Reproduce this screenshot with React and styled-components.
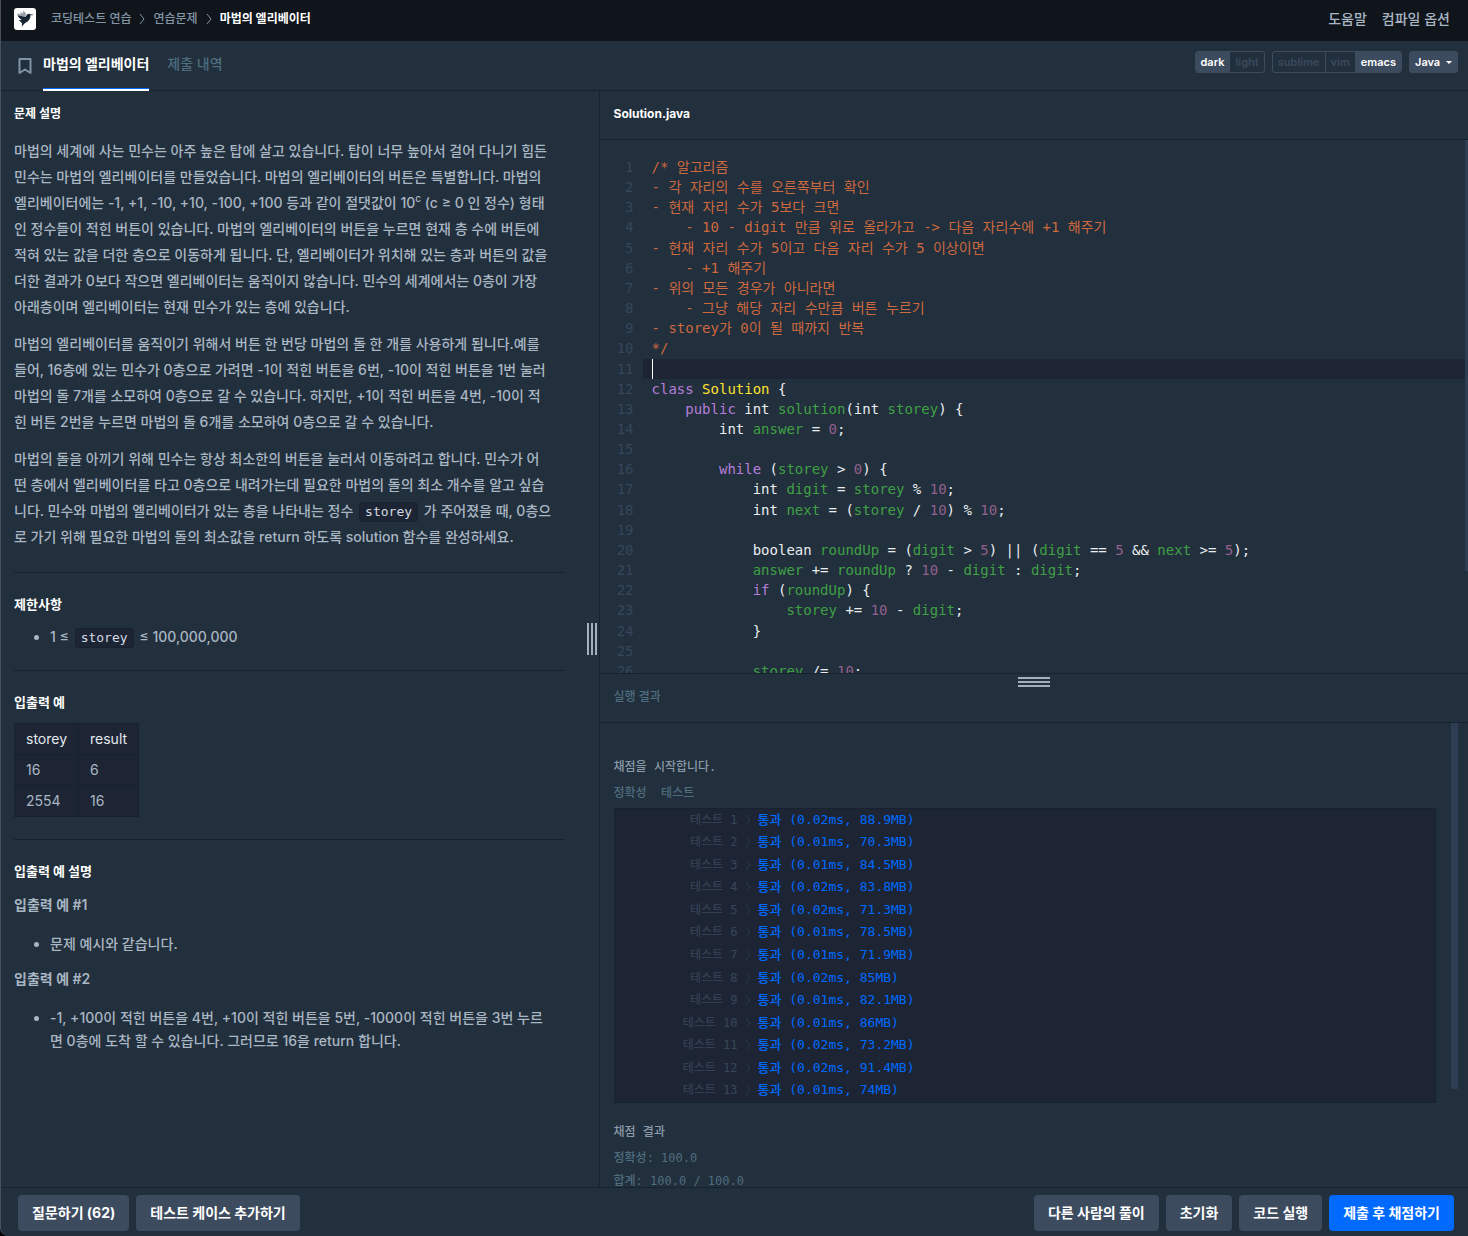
import React, { useState } from 'react'
import styled, { createGlobalStyle, css } from 'styled-components';

const sans = `Inter, "Noto Sans CJK KR", sans-serif`;
const mono = `"DejaVu Sans Mono", "Noto Sans CJK KR", monospace`;

const colors = {
    bg: '#222f3c',
    dark: '#1d2534',
    line: '#172230',
    button: '#3d4b5f',
    text: '#a9b6c3',
    muted: '#4e6d7f',
    primary: '#006aff',
}

const GlobalStyle = createGlobalStyle`
    * { box-sizing: border-box; }
    body {
        margin: 0;
        background: #000;
        color: ${colors.text};
        font-family: ${sans};
        font-size: 14px;
    }
    button, select { font-family: inherit; }
    a { color: inherit; text-decoration: none; }
`

const Page = styled.div`
    display: flex;
    flex-direction: column;
    height: 100vh;
    overflow: hidden;
    background: ${colors.bg};
    border-left: 1px solid #45525e;
    border-bottom-left-radius: 8px;
`

const Header = styled.header`
    display: flex;
    align-items: center;
    justify-content: space-between;
    flex: none;
    height: 41px;
    padding: 0 18px 3px 13px;
    background: #10151c;
`

const Breadcrumb = styled.nav`
    display: flex;
    align-items: center;
    gap: 8px;
    font-size: 12px;
    font-weight: 500;
    line-height: 18px;
    color: #8394a5;

    a:first-child {
        display: flex;
        margin-right: 7px;
    }
    strong {
        color: #fff;
        font-weight: 700;
    }
`

const HeaderLinks = styled.nav`
    display: flex;
    gap: 15px;
    font-weight: 500;
    line-height: 20px;
`

const Toolbar = styled.div`
    display: flex;
    align-items: stretch;
    justify-content: space-between;
    flex: none;
    height: 50px;
    padding: 0 10px 0 17px;
    border-bottom: 1px solid ${colors.line};
`

const Tabs = styled.nav`
    display: flex;
    gap: 18px;
`

const Bookmark = styled.button`
    display: flex;
    align-items: center;
    padding: 0;
    margin-right: -7px;
    border: 0;
    background: none;
    color: #8192a4;
`

const Tab = styled.a`
    padding-top: 13px;
    margin-bottom: -1px;
    line-height: 20px;
    font-weight: ${p => p.$active ? 700 : 500};
    color: ${p => p.$active ? '#fff' : colors.muted};
    ${p => p.$active && css`
        border-bottom: 2px solid #fff;
        box-shadow: inset 0 -1px 0 ${colors.primary};
    `}
`

const Options = styled.div`
    display: flex;
    gap: 7px;
    height: 22px;
    margin-top: 10px;
`

const Group = styled.div`
    display: flex;
    border: 1px solid ${colors.button};
    border-radius: 3px;
    overflow: hidden;
`

const Option = styled.button`
    padding: 0 5px;
    border: 0;
    font-size: 11px;
    font-weight: 600;
    line-height: 18px;
    background: ${p => p.$active ? colors.button : 'transparent'};
    color: ${p => p.$active ? '#fff' : '#3b4a5e'};

    & + & { border-left: 1px solid ${colors.button}; }
`

const Language = styled.label`
    display: flex;
    align-items: center;
    padding: 0 6px;
    gap: 5px;
    border-radius: 3px;
    background: ${colors.button};
    color: #fff;

    select {
        appearance: none;
        padding: 0;
        border: 0;
        background: none;
        color: inherit;
        font-size: 11px;
        font-weight: 600;
    }
`

const Main = styled.main`
    display: flex;
    flex: 1;
    min-height: 0;
`

const Guide = styled.section`
    display: flex;
    flex: none;
    width: 40.8%;
    border-right: 1px solid ${colors.line};
`

const GuideBody = styled.div`
    flex: 1;
    min-width: 0;
    padding: 13px 21px 0 13px;
    overflow: hidden;

    p {
        margin: 0 0 11px;
        line-height: 26px;
        font-weight: 500;
    }
    sup {
        font-size: 10px;
        line-height: 0;
    }
    hr {
        height: 1px;
        margin: 22px 0 21px;
        border: 0;
        background: ${colors.line};
    }
    ul {
        margin: 0;
        padding-left: 36px;
        line-height: 23px;
        font-weight: 500;
    }
`

const Title = styled.h2`
    margin: 0 0 ${p => p.$wide ? 14 : 11}px;
    font-size: ${p => p.$wide ? 12 : 13}px;
    font-weight: 700;
    line-height: 20px;
    color: #fff;
`

const SubTitle = styled.h3`
    margin: 12px 0 16px;
    font-size: 14px;
    font-weight: 600;
    line-height: 23px;
`

const Code = styled.code`
    padding: 1px 5px 2px;
    margin: 0 2px;
    border: 1px solid ${colors.line};
    border-radius: 4px;
    background: ${colors.dark};
    color: #d3dae2;
    font-family: ${mono};
    font-size: 13px;
    line-height: 16px;
`

const Table = styled.table`
    border-collapse: collapse;
    background: ${colors.dark};

    th, td {
        padding: 5px 11px;
        border: 1px solid ${colors.line};
        font-weight: 400;
        line-height: 20px;
        text-align: left;
    }
    th { color: #e4e9ee; }
`

const Splitter = styled.div`
    display: flex;
    align-items: center;
    justify-content: center;
    flex: none;
    width: 14px;
    cursor: col-resize;
`

const Grip = styled.span`
    display: flex;
    flex-direction: ${p => p.$horizontal ? 'column' : 'row'};
    gap: 2px;

    i {
        width: ${p => p.$horizontal ? 32 : 2}px;
        height: ${p => p.$horizontal ? 2 : 32}px;
        background: #a3b0bc;
    }
`

const Run = styled.section`
    display: flex;
    flex-direction: column;
    flex: 1;
    min-width: 0;
`

const PaneTitle = styled.h2`
    flex: none;
    height: 49px;
    margin: 0;
    padding: 13px 14px;
    border-bottom: 1px solid ${colors.line};
    font-size: 12px;
    line-height: 20px;
    font-weight: ${p => p.$muted ? 500 : 700};
    color: ${p => p.$muted ? colors.muted : '#fff'};
`

const Editor = styled.div`
    position: relative;
    flex: 28 1 0;
    min-height: 0;
    overflow: hidden;
    border-bottom: 1px solid ${colors.line};
`

const Lines = styled.ol`
    display: grid;
    grid-auto-rows: 1fr;
    min-height: 541px;
    margin: 0;
    padding: 17px 3px 0 0;
    list-style: none;
    font-family: ${mono};
    font-size: 14px;
    line-height: 20px;
`

const Line = styled.li`
    display: grid;
    grid-template-columns: 34px 1fr;
    column-gap: 9px;
    color: #37465a;
    text-align: right;

    pre {
        margin: 0;
        padding-left: 8px;
        font: inherit;
        text-align: left;
        color: #e9edf0;
        border-left: 1px solid transparent;
        background: ${p => p.$current ? colors.dark : 'none'};
    }
`

const Cursor = styled.span`
    display: inline-block;
    width: 1px;
    height: 20px;
    vertical-align: top;
    background: #fff;
`

const tokenColors = {
    c: '#cd693f',
    k: '#b67edb',
    t: '#fbe330',
    v: '#3fa045',
    n: '#93608e',
}

const Token = styled.span`
    color: ${p => tokenColors[p.$type]};
`

const Result = styled.div`
    position: relative;
    display: flex;
    flex-direction: column;
    flex: 27 1 0;
    min-height: 0;
`

const RowHandle = styled.div`
    position: absolute;
    top: 3px;
    left: 50%;
    transform: translateX(-50%);
    cursor: row-resize;
`

const Console = styled.div`
    position: relative;
    flex: 1;
    min-height: 0;
    padding: 33px 32px 0 14px;
    overflow: hidden;
    font-family: ${mono};
    font-size: 12px;
`

const Scrollbar = styled.div`
    position: absolute;
    top: 0;
    right: ${p => p.$inset ? 10 : 0}px;
    width: ${p => p.$inset ? 7 : 3}px;
    height: ${p => p.$inset ? 79 : 81}%;
    background: #2f3d54;
`

const Message = styled.div`
    margin-bottom: 3px;
    font-weight: 500;
    line-height: 23px;
    color: #8b9aa9;
`

const SubMessage = styled.div`
    font-weight: 500;
    line-height: 23px;
    white-space: pre;
    color: ${colors.muted};
`

const TestList = styled.ul`
    display: grid;
    grid-auto-rows: 1fr;
    min-height: 295px;
    margin: 3px 0 18px;
    padding: 0;
    list-style: none;
    border: 1px solid ${colors.line};
    background: ${colors.dark};
`

const TestRow = styled.li`
    display: grid;
    grid-template-columns: 123px 6px 1fr;
    column-gap: 7px;
    align-items: center;
    line-height: 22px;
    color: #37465a;

    span { text-align: right; }
    svg { color: #2b394b; }
    b {
        font-size: 13px;
        font-weight: 500;
        color: ${colors.primary};
    }
`

const Footer = styled.footer`
    display: flex;
    justify-content: space-between;
    flex: none;
    height: 49px;
    padding: 7px 14px 0 17px;
    border-top: 1px solid ${colors.line};
`

const Buttons = styled.div`
    display: flex;
    gap: 7px;
`

const Button = styled.button`
    height: 36px;
    padding: 0 14px;
    border: 0;
    border-radius: 4px;
    background: ${p => p.$primary ? colors.primary : colors.button};
    color: #fff;
    font-size: 14px;
    font-weight: 700;
    line-height: 20px;
`

// [type, text] pairs, plain strings keep the default colour
const code = [
    [['c', '/* 알고리즘']],
    [['c', '- 각 자리의 수를 오른쪽부터 확인']],
    [['c', '- 현재 자리 수가 5보다 크면']],
    [['c', '    - 10 - digit 만큼 위로 올라가고 -> 다음 자리수에 +1 해주기']],
    [['c', '- 현재 자리 수가 5이고 다음 자리 수가 5 이상이면']],
    [['c', '    - +1 해주기']],
    [['c', '- 위의 모든 경우가 아니라면']],
    [['c', '    - 그냥 해당 자리 수만큼 버튼 누르기']],
    [['c', '- storey가 0이 될 때까지 반복']],
    [['c', '*/']],
    [],
    [['k', 'class '], ['t', 'Solution'], ' {'],
    [['k', '    public'], ' int ', ['v', 'solution'], '(int ', ['v', 'storey'], ') {'],
    ['        int ', ['v', 'answer'], ' = ', ['n', '0'], ';'],
    [],
    [['k', '        while'], ' (', ['v', 'storey'], ' > ', ['n', '0'], ') {'],
    ['            int ', ['v', 'digit'], ' = ', ['v', 'storey'], ' % ', ['n', '10'], ';'],
    ['            int ', ['v', 'next'], ' = (', ['v', 'storey'], ' / ', ['n', '10'], ') % ', ['n', '10'], ';'],
    [],
    ['            boolean ', ['v', 'roundUp'], ' = (', ['v', 'digit'], ' > ', ['n', '5'], ') || (', ['v', 'digit'], ' == ', ['n', '5'], ' && ', ['v', 'next'], ' >= ', ['n', '5'], ');'],
    [['v', '            answer'], ' += ', ['v', 'roundUp'], ' ? ', ['n', '10'], ' - ', ['v', 'digit'], ' : ', ['v', 'digit'], ';'],
    [['k', '            if'], ' (', ['v', 'roundUp'], ') {'],
    [['v', '                storey'], ' += ', ['n', '10'], ' - ', ['v', 'digit'], ';'],
    ['            }'],
    [],
    [['v', '            storey'], ' /= ', ['n', '10'], ';'],
]

const tests = [
    '0.02ms, 88.9MB', '0.01ms, 70.3MB', '0.01ms, 84.5MB', '0.02ms, 83.8MB', '0.02ms, 71.3MB',
    '0.01ms, 78.5MB', '0.01ms, 71.9MB', '0.02ms, 85MB', '0.01ms, 82.1MB', '0.01ms, 86MB',
    '0.02ms, 73.2MB', '0.02ms, 91.4MB', '0.01ms, 74MB',
]

const Chevron = () => (
    <svg width='6' height='12' viewBox='0 0 6 12' fill='none' stroke='currentColor' aria-hidden='true'>
        <path d='M1 1l4 5-4 5' />
    </svg>
)

const Logo = () => (
    <svg width='22' height='22' viewBox='0 0 22 22' role='img' aria-label='home'>
        <rect width='22' height='22' rx='3' fill='#fff' />
        <path d='M9.300 2.600L12 5.500l-.5 3.500-8-1.800-.2-1.700 3.700.8-.8-2.500L9 5.500z' fill='#97a0ab' />
        <path d='M20.500 7l-4 .3c.1 3.200-1.500 5.700-4.500 7.200-1.700 1-3 2.500-4.200 4.500l.2-3.800C7 14.200 6 13.500 5 12l3-.2C6 11 4.500 9.500 3.500 7.200L11.500 9 13 6.600c1-1.100 2.500-1 3.300-.3z' fill='#172433' />
    </svg>
)

const OptionGroup = ({ label, items, initial }) => {

    const [active, setActive] = useState(initial)

    return (
        <Group role='group' aria-label={label}>
            {items.map((item) => (
                <Option key={item} type='button' $active={item === active} aria-pressed={item === active} onClick={() => setActive(item)}>
                    {item}
                </Option>
            ))}
        </Group>
    )
}

const Problem = () => (
    <Guide>
        <GuideBody>
            <Title $wide>문제 설명</Title>
            <p>
                마법의 세계에 사는 민수는 아주 높은 탑에 살고 있습니다. 탑이 너무 높아서 걸어 다니기 힘든<br />
                민수는 마법의 엘리베이터를 만들었습니다. 마법의 엘리베이터의 버튼은 특별합니다. 마법의<br />
                엘리베이터에는 -1, +1, -10, +10, -100, +100 등과 같이 절댓값이 10<sup>c</sup> (c ≥ 0 인 정수) 형태<br />
                인 정수들이 적힌 버튼이 있습니다. 마법의 엘리베이터의 버튼을 누르면 현재 층 수에 버튼에<br />
                적혀 있는 값을 더한 층으로 이동하게 됩니다. 단, 엘리베이터가 위치해 있는 층과 버튼의 값을<br />
                더한 결과가 0보다 작으면 엘리베이터는 움직이지 않습니다. 민수의 세계에서는 0층이 가장<br />
                아래층이며 엘리베이터는 현재 민수가 있는 층에 있습니다.
            </p>
            <p>
                마법의 엘리베이터를 움직이기 위해서 버튼 한 번당 마법의 돌 한 개를 사용하게 됩니다.예를<br />
                들어, 16층에 있는 민수가 0층으로 가려면 -1이 적힌 버튼을 6번, -10이 적힌 버튼을 1번 눌러<br />
                마법의 돌 7개를 소모하여 0층으로 갈 수 있습니다. 하지만, +1이 적힌 버튼을 4번, -10이 적<br />
                힌 버튼 2번을 누르면 마법의 돌 6개를 소모하여 0층으로 갈 수 있습니다.
            </p>
            <p>
                마법의 돌을 아끼기 위해 민수는 항상 최소한의 버튼을 눌러서 이동하려고 합니다. 민수가 어<br />
                떤 층에서 엘리베이터를 타고 0층으로 내려가는데 필요한 마법의 돌의 최소 개수를 알고 싶습<br />
                니다. 민수와 마법의 엘리베이터가 있는 층을 나타내는 정수 <Code>storey</Code> 가 주어졌을 때, 0층으<br />
                로 가기 위해 필요한 마법의 돌의 최소값을 return 하도록 solution 함수를 완성하세요.
            </p>
            <hr />
            <Title>제한사항</Title>
            <ul>
                <li>1 ≤ <Code>storey</Code> ≤ 100,000,000</li>
            </ul>
            <hr />
            <Title>입출력 예</Title>
            <Table>
                <thead>
                    <tr><th>storey</th><th>result</th></tr>
                </thead>
                <tbody>
                    <tr><td>16</td><td>6</td></tr>
                    <tr><td>2554</td><td>16</td></tr>
                </tbody>
            </Table>
            <hr />
            <Title>입출력 예 설명</Title>
            <SubTitle>입출력 예 #1</SubTitle>
            <ul>
                <li>문제 예시와 같습니다.</li>
            </ul>
            <SubTitle>입출력 예 #2</SubTitle>
            <ul>
                <li>
                    -1, +100이 적힌 버튼을 4번, +10이 적힌 버튼을 5번, -1000이 적힌 버튼을 3번 누르<br />
                    면 0층에 도착 할 수 있습니다. 그러므로 16을 return 합니다.
                </li>
            </ul>
        </GuideBody>
        <Splitter>
            <Grip><i /><i /><i /></Grip>
        </Splitter>
    </Guide>
)

const CodeEditor = () => (
    <Editor>
        <Lines>
            {code.map((tokens, i) => (
                <Line key={i} $current={i === 10}>
                    {i + 1}
                    <pre>
                        {i === 10 && <Cursor />}
                        {tokens.map((t, j) => (
                            typeof t === 'string' ? t : <Token key={j} $type={t[0]}>{t[1]}</Token>
                        ))}
                    </pre>
                </Line>
            ))}
        </Lines>
        <Scrollbar />
    </Editor>
)

const RunResult = () => (
    <Result>
        <RowHandle>
            <Grip $horizontal><i /><i /><i /></Grip>
        </RowHandle>
        <PaneTitle $muted>실행 결과</PaneTitle>
        <Console>
            <Message>채점을 시작합니다.</Message>
            <SubMessage>{'정확성  테스트'}</SubMessage>
            <TestList>
                {tests.map((test, i) => (
                    <TestRow key={i}>
                        <span>테스트 {i + 1}</span>
                        <Chevron />
                        <b>통과 ({test})</b>
                    </TestRow>
                ))}
            </TestList>
            <Message>채점 결과</Message>
            <SubMessage>정확성: 100.0</SubMessage>
            <SubMessage>합계: 100.0 / 100.0</SubMessage>
            <Scrollbar $inset />
        </Console>
    </Result>
)

const App = () => (
    <Page>
        <GlobalStyle />
        <Header>
            <Breadcrumb>
                <a href='#home'><Logo /></a>
                <a href='#challenges'>코딩테스트 연습</a>
                <Chevron />
                <a href='#lessons'>연습문제</a>
                <Chevron />
                <strong>마법의 엘리베이터</strong>
            </Breadcrumb>
            <HeaderLinks>
                <a href='#help'>도움말</a>
                <a href='#compile'>컴파일 옵션</a>
            </HeaderLinks>
        </Header>
        <Toolbar>
            <Tabs>
                <Bookmark type='button' aria-label='bookmark'>
                    <svg width='14' height='16' viewBox='0 0 14 16' fill='none' stroke='currentColor' strokeWidth='2'>
                        <path d='M1.500 1h11v14L7 11.500 1.500 15z' strokeLinejoin='round' />
                    </svg>
                </Bookmark>
                <Tab href='#problem' $active>마법의 엘리베이터</Tab>
                <Tab href='#submissions'>제출 내역</Tab>
            </Tabs>
            <Options>
                <OptionGroup label='theme' items={['dark', 'light']} initial='dark' />
                <OptionGroup label='key binding' items={['sublime', 'vim', 'emacs']} initial='emacs' />
                <Language>
                    <select aria-label='language' defaultValue='Java'>
                        <option>Java</option>
                    </select>
                    <svg width='6' height='3' viewBox='0 0 6 3' fill='currentColor' aria-hidden='true'>
                        <path d='M0 0h6L3 3z' />
                    </svg>
                </Language>
            </Options>
        </Toolbar>
        <Main>
            <Problem />
            <Run>
                <PaneTitle>Solution.java</PaneTitle>
                <CodeEditor />
                <RunResult />
            </Run>
        </Main>
        <Footer>
            <Buttons>
                <Button type='button'>질문하기 (62)</Button>
                <Button type='button'>테스트 케이스 추가하기</Button>
            </Buttons>
            <Buttons>
                <Button type='button'>다른 사람의 풀이</Button>
                <Button type='button'>초기화</Button>
                <Button type='button'>코드 실행</Button>
                <Button type='button' $primary>제출 후 채점하기</Button>
            </Buttons>
        </Footer>
    </Page>
)

export default App
